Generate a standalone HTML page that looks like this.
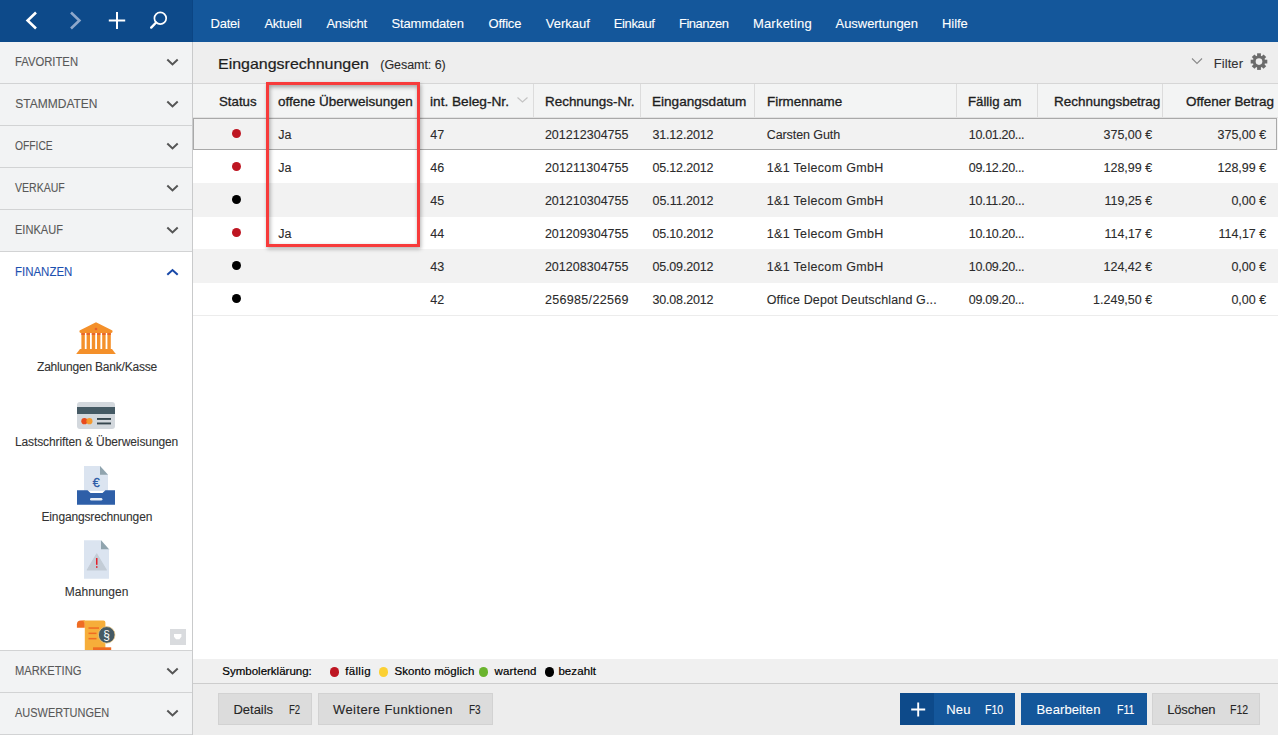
<!DOCTYPE html>
<html><head><meta charset="utf-8"><style>
html,body{margin:0;padding:0;}
body{width:1278px;height:735px;position:relative;overflow:hidden;background:#fff;font-family:"Liberation Sans", sans-serif;}
.r{position:absolute;}
.t{position:absolute;white-space:nowrap;line-height:normal;-webkit-text-stroke:0.1px currentColor;}
</style></head><body>
<div class="r" style="left:0px;top:0px;width:193px;height:42px;background:#0d4a8a;"></div>
<div class="r" style="left:192px;top:0px;width:1px;height:42px;background:#0b4584;"></div>
<div class="r" style="left:193px;top:0px;width:1085px;height:42px;background:#14579b;"></div>
<svg class="r" style="left:0;top:0" width="192" height="42" viewBox="0 0 192 42"><polyline points="36,12.5 27.6,20.5 36,28.5" fill="none" stroke="#fff" stroke-width="2.6"/><polyline points="71,12.5 79.4,20.5 71,28.5" fill="none" stroke="#8ea8cb" stroke-width="2.6"/><path d="M117 12 V29 M108.8 20.5 H125.2" stroke="#fff" stroke-width="2"/><circle cx="160.3" cy="18.2" r="5.9" fill="none" stroke="#fff" stroke-width="1.7"/><path d="M156.1 22.5 L151.2 27.6" stroke="#fff" stroke-width="2.4" stroke-linecap="round"/></svg>
<div class="t" style="left:210.60px;top:16px;font-size:13px;color:#ffffff;letter-spacing:-0.250px;">Datei</div>
<div class="t" style="left:264.40px;top:16px;font-size:13px;color:#ffffff;letter-spacing:-0.250px;">Aktuell</div>
<div class="t" style="left:326.40px;top:16px;font-size:13px;color:#ffffff;letter-spacing:-0.333px;">Ansicht</div>
<div class="t" style="left:391.50px;top:16px;font-size:13px;color:#ffffff;letter-spacing:-0.144px;">Stammdaten</div>
<div class="t" style="left:488.60px;top:16px;font-size:13px;color:#ffffff;letter-spacing:-0.180px;">Office</div>
<div class="t" style="left:545.80px;top:16px;font-size:13px;color:#ffffff;letter-spacing:-0.017px;">Verkauf</div>
<div class="t" style="left:613.80px;top:16px;font-size:13px;color:#ffffff;letter-spacing:-0.367px;">Einkauf</div>
<div class="t" style="left:679.00px;top:16px;font-size:13px;color:#ffffff;letter-spacing:-0.500px;">Finanzen</div>
<div class="t" style="left:752.90px;top:16px;font-size:13px;color:#ffffff;letter-spacing:0.212px;">Marketing</div>
<div class="t" style="left:835.60px;top:16px;font-size:13px;color:#ffffff;letter-spacing:-0.064px;">Auswertungen</div>
<div class="t" style="left:942.00px;top:16px;font-size:13px;color:#ffffff;letter-spacing:-0.075px;">Hilfe</div>
<div class="r" style="left:0px;top:42px;width:192px;height:693px;background:#f2f3f4;"></div>
<div class="r" style="left:192px;top:42px;width:1px;height:693px;background:#c9cacb;"></div>
<div class="r" style="left:0px;top:83px;width:192px;height:1px;background:#d2d3d4;"></div>
<div class="t" style="left:15.30px;top:55px;font-size:12px;color:#585858;transform:scaleX(0.9389);transform-origin:0 0;">FAVORITEN</div>
<svg class="r" style="left:160px;top:42px" width="26" height="42" viewBox="0 0 26 42"><polyline points="7.3,17.6 12.5,22.4 17.7,17.6" fill="none" stroke="#555555" stroke-width="2"/></svg>
<div class="r" style="left:0px;top:125px;width:192px;height:1px;background:#d2d3d4;"></div>
<div class="t" style="left:15.30px;top:97px;font-size:12px;color:#585858;transform:scaleX(1.0000);transform-origin:0 0;">STAMMDATEN</div>
<svg class="r" style="left:160px;top:84px" width="26" height="42" viewBox="0 0 26 42"><polyline points="7.3,17.6 12.5,22.4 17.7,17.6" fill="none" stroke="#555555" stroke-width="2"/></svg>
<div class="r" style="left:0px;top:167px;width:192px;height:1px;background:#d2d3d4;"></div>
<div class="t" style="left:15.30px;top:139px;font-size:12px;color:#585858;transform:scaleX(0.8568);transform-origin:0 0;">OFFICE</div>
<svg class="r" style="left:160px;top:126px" width="26" height="42" viewBox="0 0 26 42"><polyline points="7.3,17.6 12.5,22.4 17.7,17.6" fill="none" stroke="#555555" stroke-width="2"/></svg>
<div class="r" style="left:0px;top:209px;width:192px;height:1px;background:#d2d3d4;"></div>
<div class="t" style="left:15.30px;top:181px;font-size:12px;color:#585858;transform:scaleX(0.8765);transform-origin:0 0;">VERKAUF</div>
<svg class="r" style="left:160px;top:168px" width="26" height="42" viewBox="0 0 26 42"><polyline points="7.3,17.6 12.5,22.4 17.7,17.6" fill="none" stroke="#555555" stroke-width="2"/></svg>
<div class="r" style="left:0px;top:251px;width:192px;height:1px;background:#d2d3d4;"></div>
<div class="t" style="left:15.30px;top:223px;font-size:12px;color:#585858;transform:scaleX(0.9212);transform-origin:0 0;">EINKAUF</div>
<svg class="r" style="left:160px;top:210px" width="26" height="42" viewBox="0 0 26 42"><polyline points="7.3,17.6 12.5,22.4 17.7,17.6" fill="none" stroke="#555555" stroke-width="2"/></svg>
<div class="r" style="left:0px;top:252px;width:192px;height:398px;background:#ffffff;"></div>
<div class="t" style="left:15.30px;top:265px;font-size:12px;color:#1c51b0;transform:scaleX(0.9550);transform-origin:0 0;">FINANZEN</div>
<svg class="r" style="left:160px;top:252px" width="26" height="42" viewBox="0 0 26 42"><polyline points="7.3,22.8 12.5,18 17.7,22.8" fill="none" stroke="#1848a8" stroke-width="2"/></svg>
<div class="r" style="left:0px;top:650px;width:192px;height:1px;background:#d2d3d4;"></div>
<div class="t" style="left:15.30px;top:664px;font-size:12px;color:#585858;transform:scaleX(0.9313);transform-origin:0 0;">MARKETING</div>
<svg class="r" style="left:160px;top:651px" width="26" height="42" viewBox="0 0 26 42"><polyline points="7.3,17.6 12.5,22.4 17.7,17.6" fill="none" stroke="#555555" stroke-width="2"/></svg>
<div class="r" style="left:0px;top:692px;width:192px;height:1px;background:#d2d3d4;"></div>
<div class="t" style="left:15.30px;top:706px;font-size:12px;color:#585858;transform:scaleX(0.9137);transform-origin:0 0;">AUSWERTUNGEN</div>
<svg class="r" style="left:160px;top:693px" width="26" height="42" viewBox="0 0 26 42"><polyline points="7.3,17.6 12.5,22.4 17.7,17.6" fill="none" stroke="#555555" stroke-width="2"/></svg>
<div class="r" style="left:0px;top:734px;width:192px;height:1px;background:#d2d3d4;"></div>
<div class="t" style="left:37.00px;top:360px;font-size:12px;color:#333;letter-spacing:-0.205px;">Zahlungen Bank/Kasse</div>
<div class="t" style="left:14.90px;top:435px;font-size:12px;color:#333;letter-spacing:-0.096px;">Lastschriften &amp; Überweisungen</div>
<div class="t" style="left:41.50px;top:510px;font-size:12px;color:#333;letter-spacing:-0.153px;">Eingangsrechnungen</div>
<div class="t" style="left:64.80px;top:585px;font-size:12px;color:#333;letter-spacing:0.025px;">Mahnungen</div>
<svg class="r" style="left:70px;top:315px" width="52" height="45" viewBox="70 315 52 45"><path d="M96 322.3 L79.6 330.6 Q79 333 81 333 L111 333 Q113 333 112.4 330.6 Z" fill="#f4902a"/><circle cx="96" cy="329" r="1.3" fill="#e8602a"/><rect x="81.4" y="333" width="3.4" height="16" fill="#f4902a"/><rect x="81.4" y="333" width="3.4" height="2" fill="#e8642c"/><rect x="86.6" y="333" width="3.4" height="16" fill="#f4902a"/><rect x="86.6" y="333" width="3.4" height="2" fill="#e8642c"/><rect x="91.8" y="333" width="3.4" height="16" fill="#f4902a"/><rect x="91.8" y="333" width="3.4" height="2" fill="#e8642c"/><rect x="97" y="333" width="3.4" height="16" fill="#f4902a"/><rect x="97" y="333" width="3.4" height="2" fill="#e8642c"/><rect x="102.2" y="333" width="3.4" height="16" fill="#f4902a"/><rect x="102.2" y="333" width="3.4" height="2" fill="#e8642c"/><rect x="107.4" y="333" width="3.4" height="16" fill="#f4902a"/><rect x="107.4" y="333" width="3.4" height="2" fill="#e8642c"/><path d="M80 349 L112 349 L115.8 354 L76.2 354 Z" fill="#f4902a"/></svg>
<svg class="r" style="left:70px;top:395px" width="52" height="40" viewBox="70 395 52 40"><rect x="77" y="402" width="38" height="27" rx="3" fill="#d3d8dd"/><rect x="77" y="407" width="38" height="7" fill="#455a64"/><circle cx="84.4" cy="421.2" r="3.1" fill="#e84a1d"/><circle cx="89.4" cy="421.2" r="3.1" fill="#f7941d" fill-opacity="0.9"/><rect x="97" y="418" width="14" height="1.9" fill="#37474f"/><rect x="97" y="422.5" width="14" height="1.9" fill="#37474f"/></svg>
<svg class="r" style="left:70px;top:460px" width="52" height="50" viewBox="70 460 52 50"><path d="M84 466 L100 466 L108 474.8 L108 491 L84 491 Z" fill="#dbe4f0"/><path d="M100 466 L108 474.8 L100 474.8 Z" fill="#90a4ae"/><text x="96.3" y="486.5" font-family="Liberation Sans" font-size="12.5" fill="#2d5ca6" stroke="#2d5ca6" stroke-width="0.35" text-anchor="middle">€</text><path d="M77 490.3 L87.5 490.3 L90.5 493 L102.5 493 L105.5 490.3 L115 490.3 L115 504.8 L77 504.8 Z" fill="#2e5fa8"/><rect x="90" y="498" width="12.4" height="2.6" rx="1.3" fill="#e6ecf4"/></svg>
<svg class="r" style="left:70px;top:535px" width="52" height="50" viewBox="70 535 52 50"><path d="M84 540.3 L101 540.3 L109 549.3 L109 578.8 L84 578.8 Z" fill="#dbe4f0"/><path d="M101 540.3 L109 549.3 L101 549.3 Z" fill="#90a4ae"/><path d="M96.7 554 L106.3 570 L87.3 570 Z" fill="#c3ccd6" stroke="#c3ccd6" stroke-width="1.2" stroke-linejoin="round"/><rect x="96" y="558" width="1.5" height="6.8" fill="#e3202a"/><rect x="96" y="566.2" width="1.5" height="1.6" fill="#e3202a"/></svg>
<svg class="r" style="left:70px;top:615px" width="52" height="35" viewBox="70 615 52 35"><path d="M80.8 620.6 A3.9 3.9 0 0 0 76.9 624.5 L76.9 627.7 L84.8 627.7 L84.8 620.6 Z" fill="#ef6c23"/><path d="M80.8 620.6 L103.5 620.6 Q105.4 620.6 105.4 622.5 L105.4 650 L84.8 650 L84.8 624.5 Q84.8 620.6 80.8 620.6 Z" fill="#f6ae3a"/><rect x="88.5" y="627.3" width="10.5" height="1.5" fill="#ef6c23"/><rect x="88.5" y="632.6" width="8" height="1.5" fill="#ef6c23"/><rect x="88.5" y="637.9" width="8" height="1.5" fill="#ef6c23"/><rect x="93" y="647.3" width="18.2" height="3" fill="#ef6c23"/><circle cx="106.7" cy="634.9" r="8.3" fill="#455a64" stroke="#fcd489" stroke-width="0.7"/><text x="106.7" y="639.2" font-family="Liberation Sans" font-size="12" fill="#fff" text-anchor="middle">§</text></svg>
<svg class="r" style="left:170px;top:629px" width="16" height="16" viewBox="0 0 16 16"><rect width="16" height="16" fill="#d9dbde"/><path d="M4 4.9 H11.4 V7.7 L9.4 10.3 H6 L4 7.7 Z" fill="#fff"/></svg>
<div class="r" style="left:193px;top:42px;width:1085px;height:41px;background:#eeeeee;"></div>
<div class="r" style="left:193px;top:83px;width:1085px;height:1px;background:#d6d6d6;"></div>
<div class="t" style="left:218.30px;top:55px;font-size:15px;color:#1e1e1e;transform:scaleX(1.0649);transform-origin:0 0;-webkit-text-stroke:0.22px #1e1e1e;">Eingangsrechnungen</div>
<div class="t" style="left:380.30px;top:58px;font-size:12.5px;color:#2b2b2b;letter-spacing:-0.060px;">(Gesamt: 6)</div>
<div class="t" style="left:1213.70px;top:56px;font-size:13px;color:#333;letter-spacing:0.080px;">Filter</div>
<svg class="r" style="left:1190px;top:57px" width="14" height="8" viewBox="0 0 14 8"><polyline points="2,1.5 7,6.5 12,1.5" fill="none" stroke="#8a8a8a" stroke-width="1.1"/></svg>
<svg class="r" style="left:1247px;top:50px" width="24" height="24" viewBox="-12 -11.6 24 24"><g fill="#6b6b6b"><rect x="-1.9" y="-8.3" width="3.8" height="4" transform="rotate(0)" /><rect x="-1.9" y="-8.3" width="3.8" height="4" transform="rotate(45)" /><rect x="-1.9" y="-8.3" width="3.8" height="4" transform="rotate(90)" /><rect x="-1.9" y="-8.3" width="3.8" height="4" transform="rotate(135)" /><rect x="-1.9" y="-8.3" width="3.8" height="4" transform="rotate(180)" /><rect x="-1.9" y="-8.3" width="3.8" height="4" transform="rotate(225)" /><rect x="-1.9" y="-8.3" width="3.8" height="4" transform="rotate(270)" /><rect x="-1.9" y="-8.3" width="3.8" height="4" transform="rotate(315)" /><circle r="6.2"/></g><circle r="3.3" fill="#eeeeee"/></svg>
<div class="r" style="left:193px;top:84px;width:1085px;height:33px;background:#f3f4f4;"></div>
<div class="r" style="left:193px;top:117px;width:1085px;height:1px;background:#e2e2e2;"></div>
<div class="r" style="left:533px;top:84px;width:1px;height:33px;background:#dcdcdc;"></div>
<div class="r" style="left:640px;top:84px;width:1px;height:33px;background:#dcdcdc;"></div>
<div class="r" style="left:754px;top:84px;width:1px;height:33px;background:#dcdcdc;"></div>
<div class="r" style="left:956px;top:84px;width:1px;height:33px;background:#dcdcdc;"></div>
<div class="r" style="left:1037px;top:84px;width:1px;height:33px;background:#dcdcdc;"></div>
<div class="r" style="left:1162px;top:84px;width:1px;height:33px;background:#dcdcdc;"></div>
<div class="t" style="left:219.10px;top:94px;font-size:13px;color:#1e1e1e;transform:scaleX(1.0190);transform-origin:0 0;-webkit-text-stroke:0.32px #1e1e1e;">Status</div>
<div class="t" style="left:278.30px;top:94px;font-size:13px;color:#1e1e1e;transform:scaleX(1.0385);transform-origin:0 0;-webkit-text-stroke:0.32px #1e1e1e;">offene Überweisungen</div>
<div class="t" style="left:430.30px;top:94px;font-size:13px;color:#1e1e1e;transform:scaleX(1.0506);transform-origin:0 0;-webkit-text-stroke:0.32px #1e1e1e;">int. Beleg-Nr.</div>
<div class="t" style="left:545.20px;top:94px;font-size:13px;color:#1e1e1e;transform:scaleX(1.0334);transform-origin:0 0;-webkit-text-stroke:0.32px #1e1e1e;">Rechnungs-Nr.</div>
<div class="t" style="left:652.30px;top:94px;font-size:13px;color:#1e1e1e;transform:scaleX(1.0443);transform-origin:0 0;-webkit-text-stroke:0.32px #1e1e1e;">Eingangsdatum</div>
<div class="t" style="left:766.50px;top:94px;font-size:13px;color:#1e1e1e;transform:scaleX(1.0301);transform-origin:0 0;-webkit-text-stroke:0.32px #1e1e1e;">Firmenname</div>
<div class="t" style="left:968.00px;top:94px;font-size:13px;color:#1e1e1e;transform:scaleX(1.0152);transform-origin:0 0;-webkit-text-stroke:0.32px #1e1e1e;">Fällig am</div>
<div class="t" style="left:1053.70px;top:94px;font-size:13px;color:#1e1e1e;transform:scaleX(1.0361);transform-origin:0 0;-webkit-text-stroke:0.32px #1e1e1e;">Rechnungsbetrag</div>
<div class="t" style="left:1186.00px;top:94px;font-size:13px;color:#1e1e1e;transform:scaleX(1.0353);transform-origin:0 0;-webkit-text-stroke:0.32px #1e1e1e;">Offener Betrag</div>
<svg class="r" style="left:516px;top:96px" width="13" height="8" viewBox="0 0 13 8"><polyline points="1.5,1.5 6.5,6 11.5,1.5" fill="none" stroke="#c4c4c4" stroke-width="1.2"/></svg>
<div class="r" style="left:193px;top:118px;width:1085px;height:32px;background:#f2f2f2;"></div>
<div class="r" style="left:231.8px;top:128.8px;width:9.4px;height:9.4px;border-radius:50%;background:#be1622"></div>
<div class="t" style="left:278.30px;top:128px;font-size:12.5px;color:#2b2b2b;">Ja</div>
<div class="t" style="left:430.30px;top:128px;font-size:12.5px;color:#2b2b2b;">47</div>
<div class="t" style="left:544.90px;top:128px;font-size:12.5px;color:#2b2b2b;letter-spacing:0.018px;">201212304755</div>
<div class="t" style="left:652.50px;top:128px;font-size:12.5px;color:#2b2b2b;letter-spacing:-0.178px;">31.12.2012</div>
<div class="t" style="left:766.70px;top:128px;font-size:12.5px;color:#2b2b2b;letter-spacing:-0.073px;">Carsten Guth</div>
<div class="t" style="left:968.80px;top:128px;font-size:12.5px;color:#2b2b2b;letter-spacing:-0.330px;">10.01.20...</div>
<div class="t" style="left:1103.50px;top:128px;font-size:12.5px;color:#2b2b2b;">375,00 €</div>
<div class="t" style="left:1217.50px;top:128px;font-size:12.5px;color:#2b2b2b;">375,00 €</div>
<div class="r" style="left:231.8px;top:161.8px;width:9.4px;height:9.4px;border-radius:50%;background:#be1622"></div>
<div class="t" style="left:278.30px;top:161px;font-size:12.5px;color:#2b2b2b;">Ja</div>
<div class="t" style="left:430.30px;top:161px;font-size:12.5px;color:#2b2b2b;">46</div>
<div class="t" style="left:544.90px;top:161px;font-size:12.5px;color:#2b2b2b;letter-spacing:0.100px;">201211304755</div>
<div class="t" style="left:652.50px;top:161px;font-size:12.5px;color:#2b2b2b;letter-spacing:-0.178px;">05.12.2012</div>
<div class="t" style="left:766.70px;top:161px;font-size:12.5px;color:#2b2b2b;letter-spacing:0.333px;">1&amp;1 Telecom GmbH</div>
<div class="t" style="left:968.80px;top:161px;font-size:12.5px;color:#2b2b2b;letter-spacing:-0.330px;">09.12.20...</div>
<div class="t" style="left:1103.50px;top:161px;font-size:12.5px;color:#2b2b2b;">128,99 €</div>
<div class="t" style="left:1217.50px;top:161px;font-size:12.5px;color:#2b2b2b;">128,99 €</div>
<div class="r" style="left:193px;top:183px;width:1085px;height:34px;background:#f2f2f2;"></div>
<div class="r" style="left:231.8px;top:194.8px;width:9.4px;height:9.4px;border-radius:50%;background:#000000"></div>
<div class="t" style="left:430.30px;top:194px;font-size:12.5px;color:#2b2b2b;">45</div>
<div class="t" style="left:544.90px;top:194px;font-size:12.5px;color:#2b2b2b;letter-spacing:0.018px;">201210304755</div>
<div class="t" style="left:652.50px;top:194px;font-size:12.5px;color:#2b2b2b;letter-spacing:-0.067px;">05.11.2012</div>
<div class="t" style="left:766.70px;top:194px;font-size:12.5px;color:#2b2b2b;letter-spacing:0.333px;">1&amp;1 Telecom GmbH</div>
<div class="t" style="left:968.80px;top:194px;font-size:12.5px;color:#2b2b2b;letter-spacing:-0.230px;">10.11.20...</div>
<div class="t" style="left:1104.50px;top:194px;font-size:12.5px;color:#2b2b2b;">119,25 €</div>
<div class="t" style="left:1231.40px;top:194px;font-size:12.5px;color:#2b2b2b;">0,00 €</div>
<div class="r" style="left:231.8px;top:227.8px;width:9.4px;height:9.4px;border-radius:50%;background:#be1622"></div>
<div class="t" style="left:278.30px;top:227px;font-size:12.5px;color:#2b2b2b;">Ja</div>
<div class="t" style="left:430.30px;top:227px;font-size:12.5px;color:#2b2b2b;">44</div>
<div class="t" style="left:544.90px;top:227px;font-size:12.5px;color:#2b2b2b;letter-spacing:0.018px;">201209304755</div>
<div class="t" style="left:652.50px;top:227px;font-size:12.5px;color:#2b2b2b;letter-spacing:-0.178px;">05.10.2012</div>
<div class="t" style="left:766.70px;top:227px;font-size:12.5px;color:#2b2b2b;letter-spacing:0.333px;">1&amp;1 Telecom GmbH</div>
<div class="t" style="left:968.80px;top:227px;font-size:12.5px;color:#2b2b2b;letter-spacing:-0.330px;">10.10.20...</div>
<div class="t" style="left:1104.50px;top:227px;font-size:12.5px;color:#2b2b2b;">114,17 €</div>
<div class="t" style="left:1218.50px;top:227px;font-size:12.5px;color:#2b2b2b;">114,17 €</div>
<div class="r" style="left:193px;top:249px;width:1085px;height:34px;background:#f2f2f2;"></div>
<div class="r" style="left:231.8px;top:260.8px;width:9.4px;height:9.4px;border-radius:50%;background:#000000"></div>
<div class="t" style="left:430.30px;top:260px;font-size:12.5px;color:#2b2b2b;">43</div>
<div class="t" style="left:544.90px;top:260px;font-size:12.5px;color:#2b2b2b;letter-spacing:0.018px;">201208304755</div>
<div class="t" style="left:652.50px;top:260px;font-size:12.5px;color:#2b2b2b;letter-spacing:-0.178px;">05.09.2012</div>
<div class="t" style="left:766.70px;top:260px;font-size:12.5px;color:#2b2b2b;letter-spacing:0.333px;">1&amp;1 Telecom GmbH</div>
<div class="t" style="left:968.80px;top:260px;font-size:12.5px;color:#2b2b2b;letter-spacing:-0.330px;">10.09.20...</div>
<div class="t" style="left:1103.50px;top:260px;font-size:12.5px;color:#2b2b2b;">124,42 €</div>
<div class="t" style="left:1231.40px;top:260px;font-size:12.5px;color:#2b2b2b;">0,00 €</div>
<div class="r" style="left:231.8px;top:293.8px;width:9.4px;height:9.4px;border-radius:50%;background:#000000"></div>
<div class="t" style="left:430.30px;top:293px;font-size:12.5px;color:#2b2b2b;">42</div>
<div class="t" style="left:544.90px;top:293px;font-size:12.5px;color:#2b2b2b;letter-spacing:0.336px;">256985/22569</div>
<div class="t" style="left:652.50px;top:293px;font-size:12.5px;color:#2b2b2b;letter-spacing:-0.178px;">30.08.2012</div>
<div class="t" style="left:766.70px;top:293px;font-size:12.5px;color:#2b2b2b;letter-spacing:0.150px;">Office Depot Deutschland G...</div>
<div class="t" style="left:968.80px;top:293px;font-size:12.5px;color:#2b2b2b;letter-spacing:-0.330px;">09.09.20...</div>
<div class="t" style="left:1093.10px;top:293px;font-size:12.5px;color:#2b2b2b;">1.249,50 €</div>
<div class="t" style="left:1231.40px;top:293px;font-size:12.5px;color:#2b2b2b;">0,00 €</div>
<div class="r" style="left:193px;top:315px;width:1085px;height:1px;background:#ececec;"></div>
<div class="r" style="left:193px;top:118px;width:1082px;height:30px;border:1px solid #a9a9a9"></div>
<div class="r" style="left:266px;top:82px;width:147.5px;height:158.5px;border:3px solid #f73b3b;box-shadow:inset 1px 2px 4px rgba(0,0,0,0.34), 1px 2px 4px rgba(0,0,0,0.3)"></div>
<div class="r" style="left:193px;top:659px;width:1085px;height:24px;background:#f0f0f0;"></div>
<div class="r" style="left:193px;top:683px;width:1085px;height:1px;background:#cdcdcd;"></div>
<div class="r" style="left:193px;top:684px;width:1085px;height:51px;background:#ededed;"></div>
<div class="t" style="left:222.30px;top:665px;font-size:11.5px;color:#000;-webkit-text-stroke:0.2px #000;">Symbolerklärung:</div>
<div class="r" style="left:329.8px;top:667.1px;width:9.6px;height:9.6px;border-radius:50%;background:#be1622"></div>
<div class="t" style="left:345.20px;top:665px;font-size:11.5px;color:#000;letter-spacing:0.340px;-webkit-text-stroke:0.2px #000;">fällig</div>
<div class="r" style="left:378.7px;top:667.1px;width:9.6px;height:9.6px;border-radius:50%;background:#fbd033"></div>
<div class="t" style="left:394.50px;top:665px;font-size:11.5px;color:#000;letter-spacing:0.092px;-webkit-text-stroke:0.2px #000;">Skonto möglich</div>
<div class="r" style="left:478.7px;top:667.1px;width:9.6px;height:9.6px;border-radius:50%;background:#6ab42d"></div>
<div class="t" style="left:494.40px;top:665px;font-size:11.5px;color:#000;letter-spacing:0.200px;-webkit-text-stroke:0.2px #000;">wartend</div>
<div class="r" style="left:544.6px;top:667.1px;width:9.6px;height:9.6px;border-radius:50%;background:#000"></div>
<div class="t" style="left:558.40px;top:665px;font-size:11.5px;color:#000;letter-spacing:0.083px;-webkit-text-stroke:0.2px #000;">bezahlt</div>
<div class="r" style="left:218px;top:693px;width:92px;height:30px;background:#dcdcdc;border:1px solid #d2d2d2"></div>
<div class="t" style="left:233.50px;top:702px;font-size:13px;color:#262626;letter-spacing:-0.033px;">Details</div>
<div class="t" style="left:288.70px;top:703px;font-size:12.5px;color:#262626;transform:scaleX(0.7671);transform-origin:0 0;">F2</div>
<div class="r" style="left:318px;top:693px;width:173px;height:30px;background:#dcdcdc;border:1px solid #d2d2d2"></div>
<div class="t" style="left:333.00px;top:702px;font-size:13px;color:#262626;letter-spacing:0.412px;">Weitere Funktionen</div>
<div class="t" style="left:469.20px;top:703px;font-size:12.5px;color:#262626;transform:scaleX(0.8014);transform-origin:0 0;">F3</div>
<div class="r" style="left:900px;top:693px;width:115px;height:32px;background:#14579b;"></div>
<div class="r" style="left:900px;top:693px;width:34px;height:32px;background:#0d4a8a;"></div>
<svg class="r" style="left:900px;top:693px" width="34" height="32" viewBox="0 0 34 32"><path d="M18.2 9.5 V23.5 M11.2 16.5 H25.2" stroke="#fff" stroke-width="1.9"/></svg>
<div class="t" style="left:946.20px;top:702px;font-size:13px;color:#fff;letter-spacing:0.200px;">Neu</div>
<div class="t" style="left:985.00px;top:703px;font-size:12.5px;color:#fff;transform:scaleX(0.8465);transform-origin:0 0;">F10</div>
<div class="r" style="left:1021px;top:693px;width:126px;height:32px;background:#14579b;"></div>
<div class="t" style="left:1036.60px;top:702px;font-size:13px;color:#fff;letter-spacing:0.100px;">Bearbeiten</div>
<div class="t" style="left:1117.00px;top:703px;font-size:12.5px;color:#fff;transform:scaleX(0.8447);transform-origin:0 0;">F11</div>
<div class="r" style="left:1152px;top:693px;width:106px;height:30px;background:#dcdcdc;border:1px solid #d2d2d2"></div>
<div class="t" style="left:1167.20px;top:702px;font-size:13px;color:#262626;letter-spacing:-0.150px;">Löschen</div>
<div class="t" style="left:1230.00px;top:703px;font-size:12.5px;color:#262626;transform:scaleX(0.8465);transform-origin:0 0;">F12</div>
</body></html>
